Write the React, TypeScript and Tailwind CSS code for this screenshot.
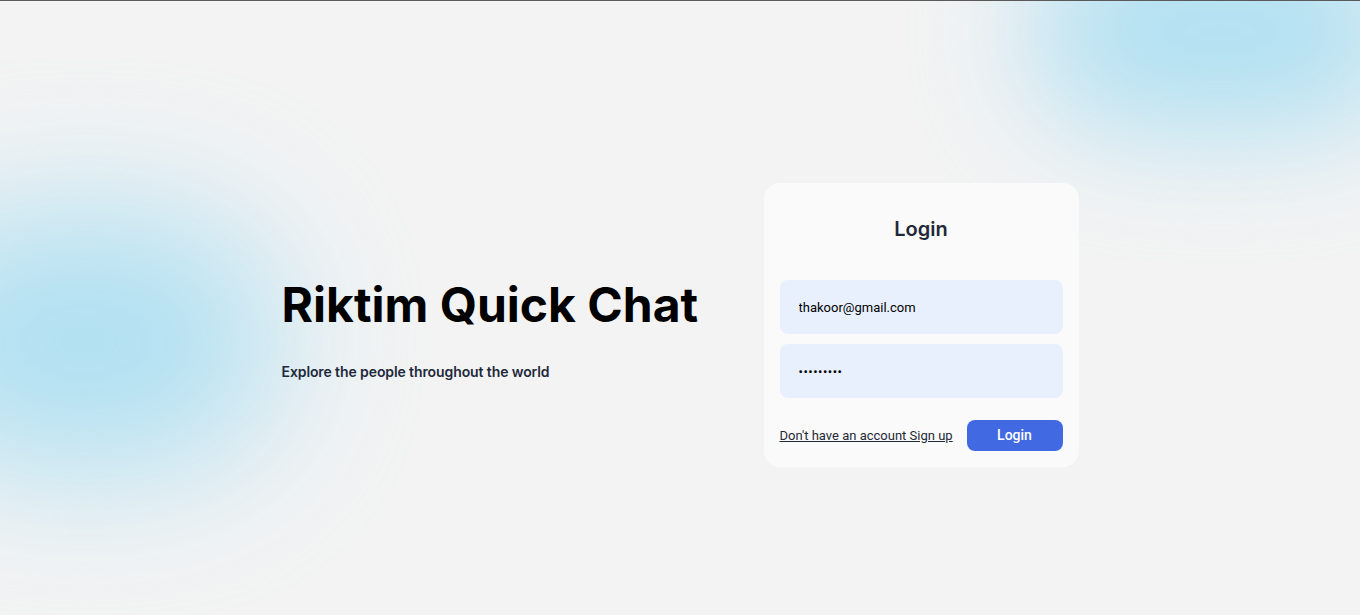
export default function App() {
  return (
    <div className="relative min-h-[615px] overflow-hidden border-t border-[#5a5a5a] bg-[#f3f3f3] font-['Inter',sans-serif]">
      {/* background glows */}
      <div className="pointer-events-none absolute left-[-110px] top-[210px] h-[260px] w-[390px] rounded-full bg-[#a9def2] opacity-90 blur-[70px]" />
      <div className="pointer-events-none absolute left-[1030px] top-[-70px] h-[200px] w-[380px] rounded-full bg-[#a9def2] opacity-90 blur-[60px]" />

      <main className="relative flex items-center justify-center pt-[182px]">
        <section className="w-[482px] pt-[12px]">
          <h1 className="text-[48px] font-bold leading-none text-black">Riktim Quick Chat</h1>
          <p className="mt-[32px] text-[14px] font-semibold tracking-[-0.1px] text-[#1e293b]">Explore the people throughout the world</p>
        </section>

        <form className="w-[315px] rounded-2xl bg-[#fafafa] px-4 pb-4 pt-[34px]">
          <h2 className="text-center text-[20px] font-semibold leading-6 text-[#1f2937]">Login</h2>
          <div className="mt-[39px] flex flex-col gap-[10px]">
            <input
              type="email"
              defaultValue="thakoor@gmail.com"
              className="h-[54px] w-full rounded-lg bg-[#e8f0fe] px-[19px] font-['Roboto',sans-serif] text-[13px] text-black outline-none"
            />
            <input
              type="password"
              defaultValue="123456789"
              className="h-[54px] w-full rounded-lg bg-[#e8f0fe] px-[19px] font-['Roboto',sans-serif] text-[13px] tracking-[0.5px] text-black outline-none"
            />
          </div>
          <div className="mt-[22px] flex items-center justify-between">
            <a href="#" className="font-['Roboto',sans-serif] text-[13px] text-[#1f2937] underline">Don't have an account Sign up</a>
            <button type="button" className="h-[31px] w-[96px] rounded-lg bg-[#4169e1] font-['Roboto',sans-serif] text-[14px] font-medium text-white">Login</button>
          </div>
        </form>
      </main>
    </div>
  );
}
